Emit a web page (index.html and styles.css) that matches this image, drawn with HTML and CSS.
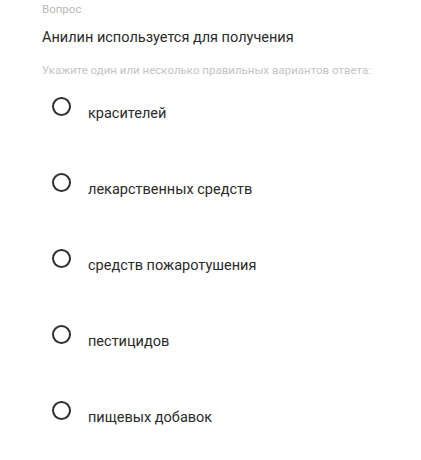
FILE: index.html
```html
<!DOCTYPE html>
<html lang="ru">
<head>
<meta charset="utf-8">
<link rel="stylesheet" href="styles.css">
</head>
<body>
<div class="question">
  <div class="label">Вопрос</div>
  <div class="title">Анилин используется для получения</div>
  <div class="hint">Укажите один или несколько правильных вариантов ответа:</div>
  <ul class="answers">
    <li class="answer"><span class="radio"></span><span class="text">красителей</span></li>
    <li class="answer"><span class="radio"></span><span class="text">лекарственных средств</span></li>
    <li class="answer"><span class="radio"></span><span class="text">средств пожаротушения</span></li>
    <li class="answer"><span class="radio"></span><span class="text">пестицидов</span></li>
    <li class="answer"><span class="radio"></span><span class="text">пищевых добавок</span></li>
  </ul>
</div>
</body>
</html>
```

FILE: styles.css
```css
html, body {
  margin: 0;
  padding: 0;
  background: #fff;
}
body {
  font-family: Roboto, "Noto Sans", Arial, sans-serif;
  color: #333;
}
.question {
  padding: 1px 0 0 42px;
}
.label {
  font-size: 11.5px;
  line-height: 16px;
  color: #b9b9b9;
}
.title {
  margin-top: 11px;
  font-size: 14.5px;
  line-height: 20px;
  color: #2b2b2b;
}
.hint {
  margin-top: 14px;
  font-size: 11.5px;
  line-height: 16px;
  color: #c4c4c4;
}
.answers {
  list-style: none;
  margin: 0;
  padding: 0 0 0 10px;
  margin-top: 19px;
}
.answer {
  display: flex;
  align-items: flex-start;
  height: 76px;
}
.radio {
  box-sizing: border-box;
  width: 19px;
  height: 19px;
  border: 2px solid #2f2f2f;
  border-radius: 50%;
  flex: none;
}
.text {
  margin-left: 17px;
  margin-top: 7px;
  font-size: 14.5px;
  line-height: 20px;
  color: #2b2b2b;
}
```
